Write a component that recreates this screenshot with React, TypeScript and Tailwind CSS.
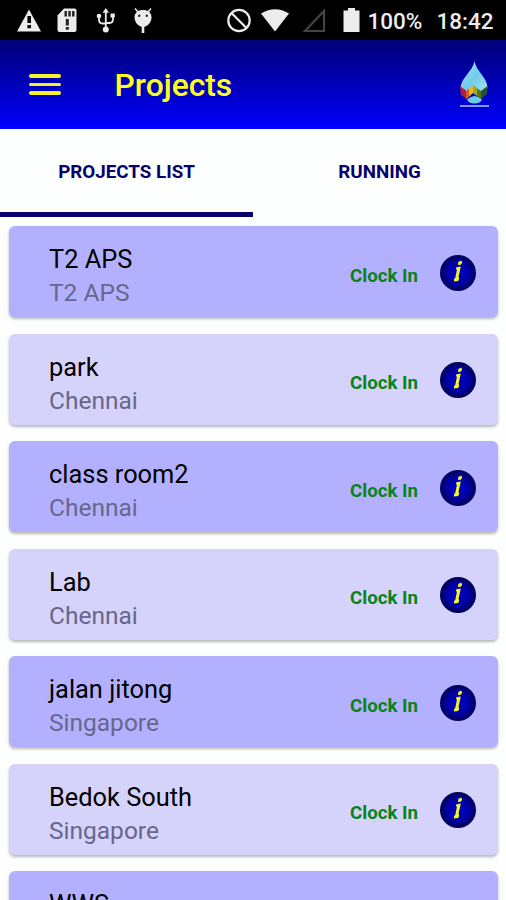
interface Project {
  name: string;
  location: string;
}

const projects: Project[] = [
  { name: "T2 APS", location: "T2 APS" },
  { name: "park", location: "Chennai" },
  { name: "class room2", location: "Chennai" },
  { name: "Lab", location: "Chennai" },
  { name: "jalan jitong", location: "Singapore" },
  { name: "Bedok South", location: "Singapore" },
  { name: "WWS", location: "Singapore" },
];

function StatusBar() {
  return (
    <div className="flex h-[40px] shrink-0 items-center bg-black pr-[12px] pl-[16px] text-[#ececec]">
      {/* Notifications */}
      <svg width="26" height="26" viewBox="0 0 26 26" fill="currentColor">
        <path d="M13 2.5 25 24.500H1Z" />
        <path d="M11.400 9h3.600v7h-3.600zM11.400 18h3.600v3.300h-3.600z" fill="#000" />
      </svg>
      <svg className="ml-[14px]" width="22" height="26" viewBox="0 0 22 26" fill="currentColor">
        <path d="M8 1.5h10.500a2 2 0 0 1 2 2V23a2 2 0 0 1-2 2h-15a2 2 0 0 1-2-2V8.500Z" />
        <path d="M8.500 4h2.400v5.500H8.500zM12.300 4h2.400v5.500h-2.400zM16.100 4h2.400v5.500h-2.400zM9.800 12h3v6.500h-3zM9.800 20h3v2.800h-3z" fill="#222" />
      </svg>
      <svg className="ml-[18px]" width="20" height="26" viewBox="0 0 20 26" fill="none" stroke="currentColor" strokeWidth="1.800">
        <path d="M9.800 4v18M3 10v2.500q0 4 3.500 4h3M17 9v3q0 4-3.500 4h-3.700" />
        <path d="m9.800 1 3.200 4.800H6.600ZM14.500 6.500h4.300v4h-4.300z" fill="currentColor" stroke="none" />
        <circle cx="3" cy="9" r="2.300" fill="currentColor" stroke="none" />
        <circle cx="9.800" cy="22.500" r="3" fill="currentColor" stroke="none" />
      </svg>
      <svg className="ml-[17px]" width="20" height="26" viewBox="0 0 20 26">
        <path d="m5 5-3-3.500M15 5l3-3.500" stroke="currentColor" strokeWidth="1.500" />
        <path d="M1.500 10.500C1.500 5.500 5 3 10 3s8.500 2.500 8.500 7.500S14 20 10 20s-8.500-4.500-8.500-9.500Z" fill="currentColor" />
        <path d="M8.700 18h2.600v8H8.700z" fill="currentColor" />
        <circle cx="6.200" cy="8.800" r="1.200" fill="#222" />
        <circle cx="13.800" cy="8.800" r="1.200" fill="#222" />
      </svg>

      {/* System */}
      <svg className="ml-auto" width="26" height="26" viewBox="0 0 26 26" fill="none" stroke="currentColor" strokeWidth="2.200">
        <circle cx="13" cy="13.500" r="10.700" />
        <path d="m5.500 6 15 15" />
      </svg>
      <svg className="ml-[8px]" width="30" height="26" viewBox="0 0 30 26" fill="currentColor">
        <path d="M1 6.500Q15-2 29 6.500L15 24.500Z" />
      </svg>
      <svg className="ml-[12px]" width="24" height="26" viewBox="0 0 24 26" fill="none" stroke="#444" strokeWidth="2.200">
        <path d="M22 4v20H3Z" />
      </svg>
      <svg className="ml-[17px]" width="17" height="26" viewBox="0 0 17 26" fill="currentColor">
        <path d="M5 1h7v2.500h4.500V25H.5V3.500H5Z" />
      </svg>
      <span className="mt-[2px] ml-[8px] w-[54px] text-[22.500px] leading-none font-medium whitespace-nowrap">100%</span>
      <span className="mt-[2px] ml-[15px] w-[57.500px] text-[22.500px] leading-none font-medium whitespace-nowrap">18:42</span>
    </div>
  );
}

function DropLogo() {
  return (
    <svg width="32" height="48" viewBox="0 0 32 48">
      <defs>
        <linearGradient id="drop" x1="0" y1="0" x2="1" y2="1">
          <stop offset="0" stopColor="#9eefff" />
          <stop offset="0.5" stopColor="#73cbea" />
          <stop offset="1" stopColor="#a4e6f2" />
        </linearGradient>
      </defs>
      <path d="M15.500.5C18 11 28.500 17 28.500 27l-7 6-7-6-7 6-6-6C2 17 13 11 15.500.5Z" fill="url(#drop)" />
      <path d="M8 38.500q7.500-7 15 0-1.500 4-7.500 4T8 38.500Z" fill="#69cce9" />
      <path d="m1 25 6 4.500v8L2 34Z" fill="#b51e36" />
      <path d="m7 30 7-5.500V32l-7 6Z" fill="#e8ba28" />
      <path d="m7 30 3-2.500v8L7 38Z" fill="#d65b2e" />
      <path d="m14 24.500 8 5.500v8l-8-6Z" fill="#557521" />
      <path d="m14 24.500 4 2.700V35l-4-3Z" fill="#98a936" />
      <path d="m22 30 6.500-5-.5 8-6 5Z" fill="#2c4d38" />
      <path d="M1 44h29v2H1z" fill="#8497ff" />
    </svg>
  );
}

function InfoIcon() {
  return (
    <svg className="mt-[2px]" width="38" height="38" viewBox="0 0 38 38">
      <defs>
        <radialGradient id="info">
          <stop offset="0" stopColor="#0000c8" />
          <stop offset="0.6" stopColor="#0000a8" />
          <stop offset="1" stopColor="#000050" />
        </radialGradient>
      </defs>
      <circle cx="19" cy="19" r="18" fill="url(#info)" />
      <path d="m19.300 8 3-1.500.9 2.300-1.500 2-2.700.3ZM17.500 13.300l4.200-.7-.3 2-1.800 7.900.6 2.200-1 2.300-4.300.5.1-2.200 1.300-1.600 1.600-7.700-1-1.200Z" fill="#f3f52b" />
    </svg>
  );
}

export default function App() {
  return (
    <div className="flex h-[900px] w-[506px] flex-col overflow-hidden bg-[#fdfefe] font-['Roboto',sans-serif]">
      <StatusBar />

      <header className="flex h-[89px] shrink-0 items-center bg-linear-to-b from-[#000078] to-[#0000ff] pr-[15px] pl-[29px]">
        <button type="button" className="flex w-[32px] flex-col gap-[5px]">
          <span className="h-[3.500px] w-full rounded-sm bg-[#f4f22c]" />
          <span className="h-[3.500px] w-full rounded-sm bg-[#f4f22c]" />
          <span className="h-[3.500px] w-full rounded-sm bg-[#f4f22c]" />
        </button>
        <h1 className="mt-[3px] ml-[53.500px] text-[31.800px] leading-none font-medium text-[#ffff1e]">Projects</h1>
        <div className="ml-auto">
          <DropLogo />
        </div>
      </header>

      <nav className="grid h-[88px] shrink-0 grid-cols-2 text-[18.800px] font-bold text-[#08006c]">
        <button type="button" className="border-b-[5px] border-[#08006c] pt-[4px]">PROJECTS LIST</button>
        <button type="button" className="border-b-[5px] border-transparent pt-[4px]">RUNNING</button>
      </nav>

      <main className="flex flex-col gap-[16.500px] px-[8.500px] pt-[9px]">
        {projects.map((project) => (
          <div
            key={project.name}
            className="flex h-[91px] shrink-0 items-center rounded-md bg-[#d5d3fc] pr-[20.500px] pl-[40.500px] shadow-[0_2px_3px_rgba(0,0,0,0.28)] odd:bg-[#b3b1ff]"
          >
            <div className="flex-1 pt-[9px]">
              <p className="text-[25.400px] leading-[34px] text-black">{project.name}</p>
              <p className="text-[24.500px] leading-[34px] text-[#68668a]">{project.location}</p>
            </div>
            <span className="mt-[9px] mr-[21px] text-[18.700px] font-bold text-[#088318]">Clock In</span>
            <InfoIcon />
          </div>
        ))}
      </main>
    </div>
  );
}
